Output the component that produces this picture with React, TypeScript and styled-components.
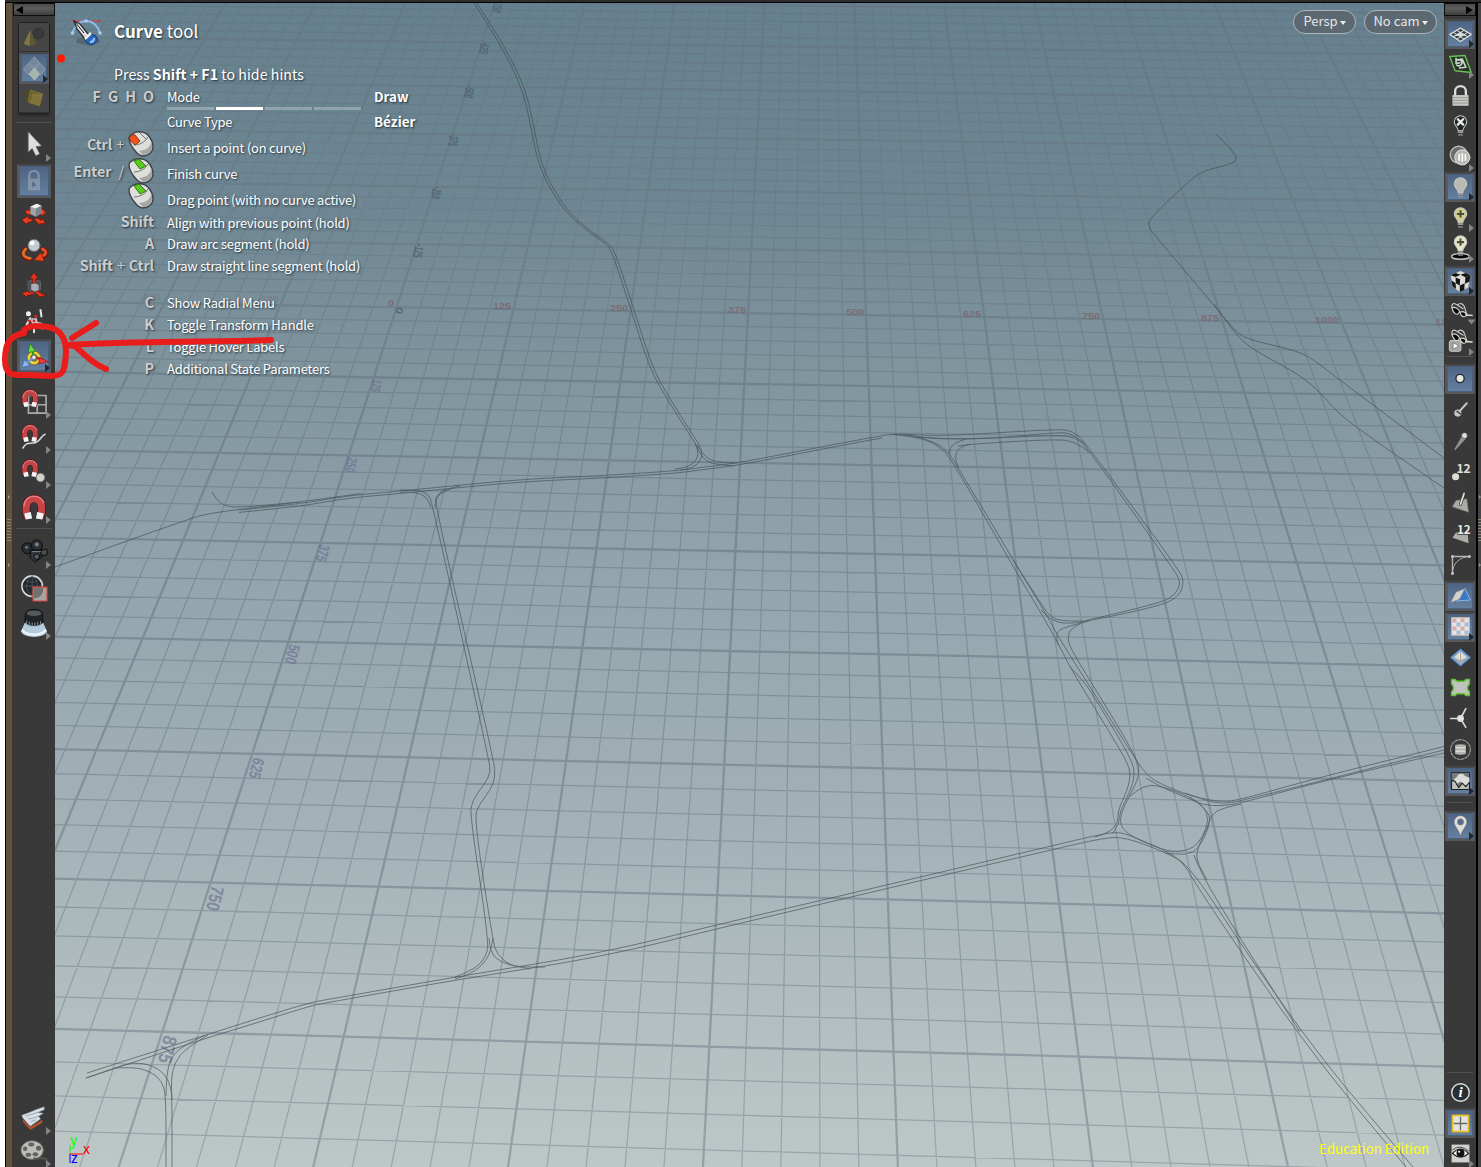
import React from "react";
import styled, { createGlobalStyle, css } from "styled-components";

const Global = createGlobalStyle`
  * { box-sizing: border-box; }
  html, body { margin: 0; padding: 0; background: #fff; }
  body { font-family: "Noto Sans CJK SC", "Noto Sans", sans-serif; overflow: hidden; }
`;

const Window = styled.div`
  position: relative;
  display: flex;
  flex-direction: column;
  width: 1481px;
  height: 1167px;
  padding-left: 5px;
  overflow: hidden;
`;
const TopEdge = styled.div`
  height: 3px;
  flex: none;
  background: #2c2e2e;
  border-bottom: 1px solid #000;
`;
const Body = styled.div`
  display: flex;
  flex: 1;
  min-height: 0;
`;
const Splitter = styled.div<{ $right?: boolean }>`
  width: ${(p) => (p.$right ? 5 : 8)}px;
  flex: none;
  display: flex;
  flex-direction: column;
  align-items: center;
  padding-top: 492px;
  gap: 20px;
  background: ${(p) => (p.$right ? "#454545" : "#5e543f")};
  border-left: ${(p) => (p.$right ? 2 : 1)}px solid #000;
  border-right: ${(p) => (p.$right ? "none" : "1px solid #3f392c")};
`;
const Notch = styled.i`
  width: 0;
  height: 0;
  border: 2px solid transparent;
  border-left-color: #a09a8c;
  margin-left: 2px;
`;
const Grip = styled.i`
  width: 4px;
  height: 24px;
  background: repeating-linear-gradient(#8d8675 0 1px, transparent 1px 3px);
`;
const Toolbar = styled.div<{ $w: number }>`
  width: ${(p) => p.$w}px;
  flex: none;
  display: flex;
  flex-direction: column;
  align-items: center;
  background: #393939;
`;
const ToolbarHead = styled.div<{ $right?: boolean }>`
  align-self: stretch;
  height: 13px;
  flex: none;
  display: flex;
  align-items: center;
  justify-content: ${(p) => (p.$right ? "flex-end" : "flex-start")};
  padding: 0 2px;
  background: linear-gradient(#4a4a4a, #5c5c5c 40%, #3e3e3e);
  border: 1px solid #0c0c0c;
  &::before {
    content: "";
    border: 4px solid transparent;
    border-${(p) => (p.$right ? "left" : "right")}: 7px solid #000;
    border-${(p) => (p.$right ? "right" : "left")}: 0;
  }
`;
const Slot = styled.div<{ $h: number }>`
  height: ${(p) => p.$h}px;
  align-self: stretch;
  flex: none;
  display: flex;
  align-items: center;
  justify-content: center;
`;
const lit = css`
  background: linear-gradient(#4d6384, #66809f);
  border: 2px solid #56585b;
  border-top-color: #474747;
  box-shadow: inset 0 0 0 1px #48617f;
`;
const Tool = styled.div<{ $active?: boolean; $size: number }>`
  position: relative;
  display: flex;
  align-items: center;
  justify-content: center;
  width: ${(p) => p.$size}px;
  height: ${(p) => p.$size}px;
  ${(p) => p.$active && lit}
`;
const Flyout = styled.i<{ $dark?: boolean; $down?: boolean; $size: number }>`
  position: absolute;
  right: ${(p) => (p.$dark ? -1 : p.$size > 30 ? 0 : 1)}px;
  bottom: ${(p) => (p.$dark ? -1 : 0)}px;
  border: 4px solid transparent;
  border-left: 5px solid ${(p) => (p.$dark ? "#23262b" : "#858585")};
  border-right: 0;
  ${(p) => p.$down && css`transform: rotate(90deg);`}
`;
const Divider = styled.div<{ $before: number; $after: number }>`
  align-self: stretch;
  flex: none;
  height: 1px;
  margin: ${(p) => p.$before}px 3px ${(p) => p.$after}px;
  background: #525252;
`;
const Gap = styled.div<{ $h?: number }>`
  ${(p) => (p.$h ? css`height: ${p.$h}px; flex: none;` : css`flex: 1;`)}
`;
const ModeGroup = styled.div`
  margin-top: 6px;
  width: 32px;
  height: 92px;
  flex: none;
  display: flex;
  flex-direction: column;
  border: 1px solid #202020;
  border-radius: 3px;
  box-shadow: 0 2px 2px #2a2a2a;
  background: #4a4a4a;
`;
const ModeCell = styled.div<{ $active?: boolean }>`
  position: relative;
  flex: 1;
  display: flex;
  align-items: center;
  justify-content: center;
  background: #454545;
  border-bottom: 1px solid #333;
  ${(p) => p.$active && lit}
`;
const Viewport = styled.div`
  position: relative;
  flex: 1;
  min-width: 0;
  overflow: hidden;
  display: flex;
  flex-direction: column;
  background: linear-gradient(#65808e 0%, #6f8794 18%, #82969f 33%, #93a5ad 50%, #a0afb5 67%, #afbbbe 83%, #bdc7c7 100%);
`;
const Scene = styled.svg`
  position: absolute;
  inset: 0;
`;
const Overlay = styled.svg`
  position: absolute;
  left: 0;
  top: 0;
  pointer-events: none;
`;
const Hud = styled.div`
  position: relative;
  flex: 1;
  display: flex;
  justify-content: space-between;
  padding: 7px 7px 0 15px;
  color: #fff;
  text-shadow: 1px 1px 2px rgba(20, 35, 45, 0.85);
`;
const HudLeft = styled.div`
  width: 400px;
`;
const Title = styled.div`
  display: flex;
  align-items: center;
  gap: 9px;
  height: 43px;
  font-size: 17px;
  line-height: 24px;
  white-space: pre;
  span { margin-top: -2px; }
`;
const HideHint = styled.div`
  margin-left: 44px;
  height: 41px;
  padding-top: 11px;
  line-height: 20px;
  font-size: 14.25px;
  white-space: pre;
`;
const HintRow = styled.div<{ $h: number }>`
  display: grid;
  grid-template-columns: 84px 13px 207px 1fr;
  align-items: center;
  height: ${(p) => p.$h}px;
  font-size: 13px;
  line-height: 18px;
  margin-top: -8px;
  margin-bottom: 8px;
  white-space: pre;
`;
const Keys = styled.div<{ $spaced?: boolean; $mouse?: boolean }>`
  display: flex;
  justify-content: flex-end;
  align-items: center;
  gap: 4px;
  color: #cccdce;
  font-size: 14.300px;
  font-weight: 700;
  letter-spacing: -0.1px;
  word-spacing: ${(p) => (p.$spaced ? 4 : 0)}px;
  margin-top: ${(p) => (p.$mouse ? -7 : -3)}px;
  i { font-style: normal; font-weight: 400; }
`;
const Desc = styled.div`
  grid-column: 3;
  letter-spacing: -0.230px;
`;
const Value = styled.div`
  font-weight: 700;
  font-size: 13.400px;
  margin-top: -3px;
`;
const ModeBar = styled.div`
  display: flex;
  gap: 2px;
  height: 3px;
  margin: -9px 0 8px 97px;
  width: 194px;
`;
const ModeStep = styled.i<{ $on?: boolean }>`
  flex: 1;
  background: ${(p) => (p.$on ? "#fff" : "rgba(185,198,205,.5)")};
`;
const Cameras = styled.div`
  display: flex;
  gap: 8px;
  height: 24px;
`;
const Pill = styled.div<{ $w: number }>`
  width: ${(p) => p.$w}px;
  height: 24px;
  display: flex;
  align-items: center;
  justify-content: center;
  gap: 2px;
  border: 1.500px solid #aeb5b9;
  border-radius: 12px;
  background: rgba(90, 98, 104, 0.75);
  color: #e4e6e7;
  font-size: 13px;
  line-height: 20px;
  padding-bottom: 3px;
  text-shadow: none;
  &::after {
    content: "";
    margin-top: 5px;
    border: 3px solid transparent;
    border-top: 4px solid #eee;
    border-bottom: 0;
  }
`;
const Foot = styled.div`
  position: relative;
  display: flex;
  align-items: flex-end;
  justify-content: space-between;
  padding: 0 15px 0 11px;
`;
const Edition = styled.div`
  color: #ffff14;
  font-size: 13.250px;
  line-height: 18px;
  padding-bottom: 9px;
`;

/* Ground plane: one unit is one major square, five cells to a side. */
const project = (u: number, v: number): [number, number] => {
  const w = 1 - 0.0017 * u - 0.0511 * v;
  return [
    (115.9 * u - 41.75 * v + 396.5) / w - 55,
    (1.41 * u + 50.77 * v + 307.3) / w - 3,
  ];
};
const segment = (a: [number, number], b: [number, number]) =>
  `M${a[0].toFixed(1)} ${a[1].toFixed(1)}L${b[0].toFixed(1)} ${b[1].toFixed(1)}`;

function gridPath(major: boolean) {
  let d = "";
  for (let i = -40; i <= 75; i++) {
    if ((i % 5 === 0) !== major) continue;
    d += segment(project(i / 5, -9), project(i / 5, 9.5));
    if (i <= 47) d += segment(project(-9, i / 5), project(16, i / 5));
  }
  return d;
}

type Pt = [number, number];
const smooth = (pts: Pt[]) => {
  let d = `M${pts[0][0]} ${pts[0][1]}`;
  for (let i = 1; i < pts.length - 1; i++) {
    const [x, y] = pts[i];
    const [nx, ny] = pts[i + 1];
    d += `Q${x} ${y} ${(x + nx) / 2} ${(y + ny) / 2}`;
  }
  const l = pts[pts.length - 1];
  return d + `L${l[0]} ${l[1]}`;
};
const shift = (pts: Pt[], dx: number, dy: number): Pt[] => pts.map(([x, y]) => [x + dx, y + dy]);

const north: Pt[] = [[474, 3], [490, 28], [506, 55], [519, 82], [526, 103], [532, 133], [538, 163], [549, 187], [564, 210], [583, 228], [605, 243], [611, 250], [619, 273], [632, 313], [648, 363], [660, 388], [695, 443]];
const west: Pt[] = [[239, 510], [300, 504], [337, 497.5], [361, 494.5], [406, 490.5], [471, 484], [528, 479], [606, 475.5], [680, 470.5], [700, 467.5], [738, 463], [818, 447.5], [882, 435.5], [894, 434], [913, 436], [946, 440], [1058, 435], [1075, 437], [1087, 447], [1174, 570], [1181, 582], [1176, 594], [1162, 602.5], [1082, 621.5]];
const south: Pt[] = [[87, 1073], [240, 1024], [310, 1002.5], [325, 1000], [455, 977], [600, 953.5], [720, 924], [908, 880], [1051, 846], [1098, 835], [1118, 831.5], [1131, 836], [1165, 850], [1184, 863], [1195, 883], [1243, 955], [1317, 1060], [1406, 1167]];
const roads: Pt[][] = [
  north,
  shift(north, 3, 0),
  [[695, 443], [699, 452], [696, 461], [688, 467], [675, 469]],
  [[698, 443], [703, 452], [700, 462], [692, 468], [680, 470]],
  [[697, 445], [703, 455], [714, 462], [735, 463]],
  [[695, 443], [701, 457], [712, 464], [735, 466]],
  west,
  shift(west.slice(0, 13), 0, 2.4),
  [[55, 567], [190, 518], [212, 513], [239, 509.5], [300, 502], [361, 493.5]],
  [[212, 492], [217, 501], [226, 506], [239, 507.7], [300, 502]],
  [[400, 490], [418, 490], [428, 494], [432, 502], [489, 760], [490.5, 773], [485, 783], [472, 801], [470, 815], [489, 942], [486, 957], [475, 969], [455, 977]],
  [[460, 486], [445, 489], [437, 495], [434.6, 503], [493.8, 760], [495.4, 777], [491, 789], [479, 805], [474, 818], [493, 942], [497, 954], [509, 965], [530, 969]],
  [[400, 492], [416, 492], [427, 497], [431, 508]],
  [[453, 488], [442, 492], [436, 498], [435, 508]],
  [[489, 938], [490, 952], [500, 962], [518, 967], [545, 967]],
  [[493, 938], [491, 952], [482, 966], [468, 975], [455, 979]],
  [[894, 434], [913, 434.5], [946, 436], [1058, 429], [1073, 431], [1085, 442], [1179, 570], [1184.5, 582], [1179, 596], [1162, 605.5], [1089, 621], [1065, 624], [1051, 620], [1041, 610]],
  [[918, 437], [970, 441], [1058, 432], [1073, 434], [1086, 445]],
  [[958, 446], [970, 444], [1058, 439], [1075, 442], [1089, 452]],
  [[970, 444], [959, 447], [954.5, 457], [958.6, 468]],
  [[966, 439], [952, 443], [949, 454]],
  [[890, 434], [916, 437], [932, 442], [946, 452], [956, 468], [985, 517], [1008, 558], [1041, 613], [1058, 643], [1070, 667], [1094, 707], [1127, 761], [1131, 775], [1127, 791], [1118, 810], [1118, 823], [1110, 832], [1095, 837]],
  [[905, 434], [932, 440], [949, 452], [958, 468], [988, 517], [1013, 560], [1048, 617], [1060, 640], [1094, 693], [1136, 760], [1146, 774], [1158, 783], [1193, 797], [1222, 802], [1241, 799.5], [1317, 778], [1444, 746.5]],
  [[1013, 560], [1045, 610], [1051, 617], [1061, 621], [1082, 621]],
  [[1070, 667], [1084, 681], [1098, 703], [1132, 760], [1135, 775], [1130, 792], [1120, 811], [1119, 824], [1112, 834]],
  [[1089, 621], [1064, 627], [1056, 633], [1058, 645]],
  [[1082, 623], [1071, 628], [1067.5, 637], [1070, 648], [1099, 695], [1137, 758], [1140, 775], [1129, 797], [1121, 813], [1120, 826], [1132, 837], [1163, 850], [1179, 852], [1194, 848], [1203, 836], [1209, 820], [1204, 806], [1188, 796], [1158, 785], [1143, 786], [1129, 797]],
  [[1146, 778], [1158, 786], [1190, 799], [1203, 805], [1222, 806], [1241, 803], [1331, 779], [1444, 753]],
  [[1185, 793], [1204, 800], [1222, 804], [1241, 801], [1444, 750]],
  [[1241, 804], [1222, 808], [1211, 815], [1208, 827], [1198, 846], [1196, 860], [1207, 880]],
  [[1190, 797], [1207, 809], [1211, 822], [1199, 849], [1186, 855], [1165, 853]],
  south,
  [[86, 1078], [200, 1040], [240, 1028], [310, 1006], [325, 1003], [455, 980], [600, 957.5], [720, 928], [923, 880], [1051, 850], [1103, 838], [1125, 837], [1167, 853], [1190, 866], [1250, 958], [1322, 1060], [1413, 1167]],
  [[1194, 855], [1200, 872], [1238, 935], [1300, 1032]],
  [[86, 1078], [115, 1068], [133, 1062], [152, 1065], [165, 1074], [171, 1087], [172, 1100], [172, 1167]],
  [[115, 1068], [133, 1067], [150, 1071], [162, 1081], [166, 1096], [166, 1167]],
  [[205, 1035], [182, 1046], [170, 1059], [166.5, 1077], [166, 1096]],
  [[208, 1035], [186, 1048], [175, 1062], [171, 1078], [172, 1100]],
  [[1216, 134], [1232, 150], [1238, 159], [1230, 164.5], [1202, 171], [1187, 183], [1153, 215], [1147, 225], [1157, 238], [1218, 310], [1237, 333], [1250, 340], [1298, 351], [1314, 360], [1341, 381], [1444, 458]],
  [[1214, 304], [1234, 333], [1253, 350], [1304, 377], [1327, 400], [1345, 420], [1444, 488]],
];

const xLabels: [string, number, number][] = [
  ["-250", 150, 299.5], ["-125", 268, 301.5], ["0", 391, 306], ["125", 502, 308.5], ["250", 619, 311], ["375", 737, 313],
  ["500", 855, 315], ["625", 972, 317], ["750", 1091, 319], ["875", 1210, 321], ["1000", 1327, 323], ["1125", 1447, 325],
];
const zLabels: [string, number, number, number][] = [
  ["-750", 497, 6, 13], ["-625", 484, 47, 14], ["-500", 469, 91, 14], ["-375", 453, 139, 14], ["-250", 436, 192, 14], ["-125", 418, 250, 15],
  ["0", 400, 310, 7], ["125", 376, 385, 13], ["250", 350.5, 464, 15], ["375", 322, 552, 17], ["500", 291, 653, 20],
  ["625", 255, 767, 21], ["750", 213, 897, 25], ["875", 165, 1048, 28],
];

function GroundPlane() {
  return (
    <Scene width="1389" height="1164" viewBox="0 0 1389 1164">
      <defs>
        <linearGradient id="line" gradientUnits="userSpaceOnUse" x1="0" y1="0" x2="0" y2="1164">
          <stop offset="0" stopColor="#647885" />
          <stop offset=".35" stopColor="#71848e" />
          <stop offset=".7" stopColor="#83929b" />
          <stop offset="1" stopColor="#95a1a8" />
        </linearGradient>
      </defs>
      <path d={gridPath(false)} stroke="url(#line)" strokeWidth="1.25" opacity=".9" fill="none" />
      <path d={gridPath(true)} stroke="url(#line)" strokeWidth="2.300" fill="none" />
      <g fontFamily="Liberation Sans, sans-serif" fontWeight="700" textAnchor="middle">
        {xLabels.map(([t, x, y]) => (
          <text key={t} transform={`translate(${x - 55} ${y - 3}) scale(1.200 1)`} fontSize="9" fill="#7d5a62" opacity={t[0] === "-" ? 0.3 : 0.65}>{t}</text>
        ))}
        {zLabels.map(([t, x, y, len]) => (
          <text key={t} transform={`translate(${x - 59} ${y - 3}) rotate(${y < 400 ? 102 : 104}) scale(${len / (t.length * 9)} ${(y < 320 ? 0.4 : 0.45) + len / 36})`} fontSize="16" fill={y < 320 ? "#4c5d6d" : "#666a8c"} opacity={y < 320 ? 0.75 : 0.6}>{t}</text>
        ))}
      </g>
      <g transform="translate(-55 -3)" fill="none" stroke="#424c50" strokeWidth=".85" opacity=".75">
        {roads.map((r, i) => <path key={i} d={smooth(r)} />)}
      </g>
    </Scene>
  );
}

const Art = ({ s = 28, children }: { s?: number; children: React.ReactNode }) => (
  <svg width={s} height={s} viewBox="0 0 28 28" fill="none" overflow="visible" strokeLinecap="round" strokeLinejoin="round">{children}</svg>
);

const Arrows = () => (
  <g fill="#e8401f" stroke="#7a120a" strokeWidth=".8">
    <path d="M4 10l5-2 1 2 3 0v3l-5 1z" /><path d="M24 8l3 4-5 3-1-2-3 0v-4z" />
    <path d="M1 19l7-4 0 3 4 0v3l-5 1-1 2z" /><path d="M26 23l-9 1 1-2-4-3 3-2 5 3 1-2z" />
  </g>
);
const Cube = ({ x = 0, y = 0 }) => (
  <g transform={`translate(${x} ${y})`}>
    <path d="M10 5l7-3 5 2v8l-6 4-6-3z" fill="#9ba3a9" /><path d="M10 5l7-3 5 2-6 3z" fill="#eef2f4" /><path d="M16 7l6-3v8l-6 4z" fill="#7b848b" />
  </g>
);
const Magnet = ({ k = 1 }) => (
  <g transform={`scale(${k})`}>
    <path d="M7.500 25C4 18 4.500 5 14 5s9.500 13 6.500 20" stroke="#4e1316" strokeWidth="9" strokeLinecap="butt" />
    <path d="M7.500 25C4 18 4.500 5 14 5s9.500 13 6.500 20" stroke="#c54547" strokeWidth="7.500" strokeLinecap="butt" />
    <path d="M3 13C4 6 8 2.500 14 2.500s9 3 10.500 7" stroke="#ea8182" strokeWidth="1.500" />
    <path d="M3.500 21l7-1.500 1.500 7-7 1zM24.500 21l-7-1.500-1.500 7 7 1z" fill="#f3f3f3" />
  </g>
);
const Bulb = ({ fill, y = 0 }: { fill: string; y?: number }) => (
  <g transform={`translate(0 ${y})`}>
    <path d="M14 3a7 7 0 0 0-7 7c0 4 4 5 4.500 10h5C17 15 21 14 21 10a7 7 0 0 0-7-7z" fill={fill} stroke="#c9c9c5" strokeWidth="1.200" />
    <path d="M11.500 21.500h5M12 24.500h4" stroke="#999" strokeWidth="1.600" />
  </g>
);
const Glasses = ({ y = 0 }) => (
  <g transform={`translate(0 ${y})`}>
    <path d="M5 10C3 5 6 3 9 5l8 5M11 6c2-3 5-2 7 1l3 9" stroke="#c9c9c5" strokeWidth="1.300" />
    <path d="M4.500 9c3-1.500 7 .5 8.500 4-1 3-3 4-5 2.500C6 14 5 12 4.500 9z" fill="#080808" stroke="#d6d6d2" strokeWidth="1.300" />
    <path d="M13.500 14c3-1.500 6 0 7.500 3-2 3-6 3-7.500-3z" fill="#080808" stroke="#d6d6d2" strokeWidth="1.300" />
    <path d="M20 17l7 .5" stroke="#e5e5e2" strokeWidth="1.600" />
  </g>
);

const icons: Record<string, React.ReactNode> = {
  objects: <g><circle cx="19" cy="9" r="6.500" fill="#3a3a3a" stroke="#2c2c2c" /><path d="M9 5l7 16c-2 4-13 4-15 0z" fill="#5f5836" /><path d="M9 5L1 21c1 2 4 3 7 3z" fill="#7f7549" /></g>,
  points: <g stroke="#9aa6b2" fill="#75879c" strokeWidth="1"><path d="M14 0l6 7-6 7-6-7z" /><path d="M7 8l6 7-6 7-6-7zM21 8l6 7-6 7-6-7z" /><path d="M14 14l6 7-6 7-6-7z" fill="#a6b5ac" stroke="#bcc8b6" /></g>,
  prims: <g><path d="M2 5l9-1-2 15-7-2z" fill="#4f4929" /><path d="M10 4l15 5-4 15-14-5z" fill="#6b6230" stroke="#877b3c" /><path d="M12 8l13 1-4 15-12-3z" fill="#80743a" /></g>,
  select: <path d="M8 0l14 15-6 .5 4 8-4 2-4-8-4 4z" fill="#dedede" stroke="#777" strokeWidth=".6" />,
  lock: <g opacity=".7"><path d="M9 12V8a5 5 0 0 1 10 0v4" stroke="#94a2b2" strokeWidth="2.500" /><path d="M7.500 11.500h13V24h-13z" fill="#94a2b2" /><path d="M12 14l5 5-3 .3-2 2z" fill="#4f6a8c" /></g>,
  move: <g><Arrows /><Cube /></g>,
  rotate: <g><path d="M5 13c-6 5-3 10 5 11M23 13c7 3 5 8-3 9" stroke="#75160a" strokeWidth="4.500" /><path d="M5 13c-5 5-2 9 5 10" stroke="#d9702c" strokeWidth="3" /><path d="M23 13c6 3 4 7-3 8" stroke="#e3502a" strokeWidth="3" /><path d="M25 26l-11-1 7-8z" fill="#e8421c" stroke="#75160a" strokeWidth=".6" /><circle cx="14" cy="9" r="6.500" fill="#c3cbd3" stroke="#626c75" /><circle cx="12" cy="6.500" r="2.500" fill="#fff" /></g>,
  scale: <g><path d="M8 9l6-2 7 2v9l-7 4-6-3z" fill="#4b5257" stroke="#70787c" strokeWidth=".6" /><path d="M14 0l4.500 6h-3v5h-3V6h-3zM1 22l7-3v2l5-1v3l-6 1v2zM27 24l-9 2 1-2-4-3 2-2 5 3z" fill="#e8341f" stroke="#7a120a" strokeWidth=".7" /><path d="M11 12l4-1 4 2v5l-4 2-4-2z" fill="#a9b0b5" /></g>,
  pose: <g stroke="#e4e4e4" strokeWidth="2.200"><path d="M21 1l1 7M10 10l-4 7M12 12l2 8 0 5M17 15l5 1 1 5" /><circle cx="8" cy="5" r="2.700" fill="#eee" stroke="none" /><path d="M11 10l6 0 1 6-5 2z" fill="#ccc" stroke="none" /><g fill="#e02a20" stroke="none"><circle cx="16" cy="8" r="1.600" /><circle cx="9" cy="13" r="1.600" /><circle cx="14" cy="13" r="1.600" /><circle cx="17" cy="18" r="1.600" /></g></g>,
  handles: <g><circle cx="14" cy="16" r="5.500" stroke="#8a7510" strokeWidth="4" /><circle cx="14" cy="16" r="5.500" stroke="#f0d83c" strokeWidth="2.600" /><path d="M14 15L12 7" stroke="#2f9a22" strokeWidth="2.500" /><path d="M10 1l5.500 8-7.500 1z" fill="#64dd3d" stroke="#25801b" strokeWidth=".7" /><path d="M14 15l9 3" stroke="#c32222" strokeWidth="2.500" /><path d="M29 20l-9-4-1 6z" fill="#f13a3c" stroke="#8f1414" strokeWidth=".7" /><path d="M13 16l-6 5" stroke="#6d9cd8" strokeWidth="2.500" /><path d="M1 26l3-8 5 6z" fill="#8fbaf0" stroke="#4571a8" strokeWidth=".7" /><circle cx="14" cy="15.500" r="2.300" fill="#fff" stroke="#777" /></g>,
  snapGrid: <g><path d="M8 7h19v19H8zM17.500 7v19M8 17h19" stroke="#a9adaa" strokeWidth="1.800" /><Magnet k={0.7} /></g>,
  snapCurve: <g><Magnet k={0.7} /><path d="M2 26c4-8 8-4 14-6 6-3 6-8 10-9" stroke="#d8dcdc" strokeWidth="1.600" /></g>,
  snapPoint: <g><Magnet k={0.7} /><circle cx="21" cy="20" r="4.600" fill="#d2d2c9" stroke="#777" /></g>,
  snapAll: <Magnet />,
  camera: <g stroke="#060606"><circle cx="7" cy="10" r="6" fill="#282c31" /><circle cx="17" cy="7" r="6" fill="#2b3036" /><path d="M11 12l12 0v7l-8 6-5-5z" fill="#353a40" /><circle cx="17" cy="6" r="2.200" fill="#78818b" stroke="none" /><circle cx="6" cy="9" r="1.800" fill="#68717b" stroke="none" /><path d="M22 12l6-1v6l-6 1z" fill="#484e54" /><circle cx="17" cy="19" r="3" fill="#545d67" /><path d="M12 13.500h9" stroke="#7b848c" /></g>,
  render: <g><circle cx="12" cy="12" r="11" stroke="#d9d9d9" strokeWidth="1.800" fill="#20262a" /><path d="M1 12h22M12 1v22M5 5c4 4 10 4 14 0M12 1c-8 6-8 16 0 22M12 1c7 6 7 12 3 18" stroke="#596368" strokeWidth=".8" /><path d="M13 13h15v15H13z" fill="#a5a5a2" stroke="#da4545" strokeWidth="1.300" /><path d="M14 25c7 0 10-5 10-11H14z" fill="#72706d" /></g>,
  brush: <g><path d="M4 14L0 23c2 8 26 8 28 0l-4-9z" fill="#b4cddc" /><path d="M2 22c5 6 19 6 24 0" stroke="#ecf6fc" strokeWidth="2.500" /><path d="M5 3c2-5 16-5 18 0l1 10c-3 5-17 5-20 0z" fill="#202426" stroke="#0d0d0d" strokeWidth=".7" /><ellipse cx="14" cy="3.500" rx="8" ry="3" fill="#545a5d" /><path d="M6 12v3M9 13v4M12 14v4M15 14v4M18 13.500v4M21 12.500v3" stroke="#8d979b" /></g>,
  hands: <g><path d="M2 15l8 9 13-8v3L10 27 2 18z" fill="#b84e2c" /><path d="M1 11l8-3 7-3 9-3 0 3-7 3 6 1-5 3 2 3-11 8-8-9z" fill="#d7e1e7" stroke="#8c99a2" strokeWidth=".6" /><path d="M5 12l7-2 6-2M8 15l6-1 5-2M11 18l5-2" stroke="#87939b" strokeWidth=".8" /></g>,
  reel: <g><ellipse cx="12" cy="13" rx="12" ry="10" fill="#bdbdb9" stroke="#77776f" /><g fill="#62635e"><ellipse cx="11" cy="7" rx="3.200" ry="2.200" /><ellipse cx="4.500" cy="11.500" rx="2.400" ry="2.400" /><ellipse cx="19" cy="11" rx="2.800" ry="2.600" /><ellipse cx="8" cy="18" rx="3" ry="2.200" /><ellipse cx="15.500" cy="17.500" rx="3" ry="2.200" /></g><path d="M14 22c6 1 9-2 13 1l1 4" stroke="#555" strokeWidth="2" /></g>,

  plane: <g transform="translate(0 3)" stroke="#d8dad6" strokeWidth="1.400"><path d="M14 5l12 7-12 8L2 12z" fill="#33404d" /><path d="M10 7.500l12 7M6 9.700l12 7.600M18 7.500L6 14.700M22 9.700l-12 7.600" strokeWidth="1.200" /><path d="M14 9l4.500 3-4.500 3-4.500-3z" fill="#d8dad6" stroke="none" /></g>,
  orient: <g><path d="M2 5l17-1 7 19-18-2z" stroke="#6bbd55" strokeWidth="1.600" fill="#263126" /><path d="M9 9l7-1 4 9-7 1M10 15c4 2 8-3 4-6M9 7v6l4-1" stroke="#c9d9c9" strokeWidth="1.800" /></g>,
  padlock: <g><path d="M8 14V9a6 5.500 0 0 1 12 0v5" stroke="#dededb" strokeWidth="2.600" /><path d="M5 13.500h18v12H5z" fill="#c9c9c4" /><path d="M5 16.500h18M5 19.500h18M5 22.500h18" stroke="#92928d" /></g>,
  noLight: <g><Bulb fill="#20272a" /><path d="M11 7l6 6M17 7l-6 6" stroke="#eee" strokeWidth="2.500" /></g>,
  headlight: <g><circle cx="12" cy="12" r="9.500" fill="#6a6d69" stroke="#b9bab6" strokeWidth="1.600" /><circle cx="16" cy="15" r="8.500" fill="#b7b9b5" stroke="#e8e8e5" /><path d="M12.500 12v6M16 11v8M19.500 12v6" stroke="#f7f7f5" strokeWidth="2" /></g>,
  light: <Bulb fill="#b9b9b3" />,
  lightPlus: <g><Bulb fill="#d1cd91" /><path d="M14 6v8M10 10h8" stroke="#4a4e3b" strokeWidth="2.300" strokeLinecap="butt" /></g>,
  shadow: <g><ellipse cx="14" cy="24" rx="10" ry="3.200" fill="#060606" stroke="#cacac4" strokeWidth="1.500" /><Bulb fill="#e6e5c8" y={-2} /><path d="M14 4v8M10 8h8" stroke="#4a4e3b" strokeWidth="2.300" strokeLinecap="butt" /></g>,
  checker: <g><path d="M3 8l11-5 11 5-2 14-10 5-8-6z" fill="#dcdcd6" stroke="#777" strokeWidth=".6" /><g fill="#151515"><path d="M8.500 5.500l5.500 2-5.500 2.500L3 8zM19.500 5.500L25 8l-5.500 2.300L14 7.500z" /><path d="M8.500 10.500l5 2-.3 7-4.500-2.500zM4 14l4.500 3 .5 6.500L5 20.500zM19.500 10.300L25 8l-1 7-5 2.500zM13.200 19.500l5.500-2.500-.5 7.500-5 2.500z" /></g></g>,
  glasses: <Glasses y={2} />,
  glassesPlay: <g><Glasses y={-3} /><rect x="1.500" y="13" width="13" height="12" rx="2" fill="#a5a7a3" stroke="#d2d2cf" /><path d="M6 15.500l6 3.500-6 3.500z" fill="#fff" stroke="#666" strokeWidth=".7" /></g>,
  point: <circle cx="13.500" cy="14" r="4.600" fill="#e8e8e0" stroke="#252b32" strokeWidth="1.500" />,
  normal: <g><path d="M12 17L21 7" stroke="#c7c7c1" strokeWidth="2.200" /><circle cx="11" cy="18" r="4" fill="#c7c7c1" /><path d="M10 16l4 3" stroke="#333" strokeWidth="1.500" /></g>,
  trail: <g><path d="M7 24L16 8l4 4L8 25z" fill="#92928d" /><circle cx="18.500" cy="8.500" r="3.300" fill="#dfdfda" stroke="#444" strokeWidth=".7" /></g>,
  number: <g><circle cx="8.500" cy="21" r="4" fill="#ddddd5" /><text x="9.500" y="16.500" fontSize="13.500" fontWeight="700" fontFamily="Noto Sans CJK SC, sans-serif" fill="#e0e0db">12</text></g>,
  primNormal: <g><path d="M9 13l12-2 2 15-18-6z" fill="#a9aba5" stroke="#777" strokeWidth=".6" /><path d="M14 17l4-12" stroke="#333" strokeWidth="3.500" /><path d="M14 17l4-12" stroke="#dcdcd7" strokeWidth="2" /></g>,
  primNumber: <g><path d="M9 14l13-1 1 13-18-6z" fill="#acaea8" /><text x="10" y="15.500" fontSize="13" fontWeight="700" fontFamily="Noto Sans CJK SC, sans-serif" fill="#eeeeea" stroke="#333" strokeWidth="1.500" paintOrder="stroke">12</text></g>,
  hull: <g stroke="#b7b9b4" strokeWidth="1.500"><path d="M5 24V5h19" /><path d="M5 24C5 13 12 6 24 5" strokeWidth="1" /><g fill="#eee"><circle cx="5" cy="5" r="1" /><circle cx="5" cy="24" r="1" /><circle cx="24" cy="5" r="1" /></g></g>,
  shaded: <g><path d="M19 5l6 13-15 1z" fill="#3978c4" stroke="#8cc0f0" /><path d="M9 9l10-4-6 12-10 4z" fill="#d2d3cc" stroke="#777" strokeWidth=".6" /></g>,
  uv: <g><path d="M4 4h20v20H4z" fill="#e3e5e6" stroke="#b8b6ac" strokeWidth="1.300" />{[0, 1, 2, 3].map((r) => [0, 1].map((c) => <rect key={`${r}${c}`} x={5 + c * 9 + (r % 2) * 4.5} y={5 + r * 4.5} width="4.500" height="4.500" fill={r % 2 ? "#a6bbd8" : "#dfa9a7"} />))}</g>,
  wireDiamond: <g><path d="M14 5l10.500 9L14 23 3.500 14z" fill="#aaaba5" stroke="#559ae8" strokeWidth="1.700" /><path d="M14 7l7 7-7 3-7-3z" fill="#deded9" /><path d="M14 7v10" stroke="#999" strokeWidth=".8" /></g>,
  ghost: <path d="M4 5l4 0 2 2h8l2-2 4 0v5l-2 3v3l2 3v4h-4l-2-2h-8l-2 2H4v-4l2-3v-3L4 10z" fill="#c0c3bd" stroke="#5cc631" strokeWidth="1.600" />,
  axes: <g stroke="#ddddd8" strokeWidth="1.800"><path d="M14 14L3 14M14 14l6-11M14 14l6 10" /><circle cx="14" cy="14" r="3" fill="#e8e8e3" /></g>,
  cylinder: <g><circle cx="14" cy="14" r="11" stroke="#969994" strokeWidth="1.300" strokeDasharray="3 1.500" /><path d="M8 9q6-1.500 12 0v10q-6 1.500-12 0z" fill="#b2b4ae" /><path d="M9 12h10M9 16h10" stroke="#d7d8d3" strokeWidth="1.500" /></g>,
  image: <g><path d="M4 5h20v19H4z" fill="#737a7d" stroke="#252525" /><path d="M10 10c1-4 7-5 9-1l5 2v5l-5 4-5-5-6 4c-3-4-1-8 2-9z" fill="#dcddd8" /><path d="M4 14l4 1 4 7 4-5 4 4 4-5v8H4z" fill="#bfc0bb" stroke="#1e2020" strokeWidth="1.200" /></g>,
  pin: <path fillRule="evenodd" d="M14 25.500C12 18 7 15 7 10a7 7 0 0 1 14 0c0 5-5 8-7 15.500zM14 6.500a3.500 3.500 0 1 0 0 7 3.500 3.500 0 0 0 0-7z" fill="#deded9" stroke="#777" strokeWidth=".5" />,
  info: <g><circle cx="14" cy="14" r="9.800" fill="#283036" stroke="#e1e1df" strokeWidth="1.600" /><text x="14" y="19.500" textAnchor="middle" fontSize="17" fontWeight="700" fontStyle="italic" fontFamily="Liberation Serif, serif" fill="#fff">i</text></g>,
  layout: <g><path d="M5 5h18v18H5z" fill="#e3e4df" stroke="#e4bd24" strokeWidth="2" /><path d="M14 7v14M7 14h14" stroke="#6c6b62" strokeWidth="1.500" /></g>,
  eye: <g><path d="M4 4h20v20H4z" fill="#d0d1ce" /><path d="M5 14q9-10 18 0-9 8-18 0z" fill="#fff" stroke="#222" strokeWidth="1.300" /><circle cx="14" cy="13.500" r="4.500" fill="#111" /><circle cx="12.500" cy="12" r="1.200" fill="#fff" /><path d="M5 10q8-7 18 1" stroke="#444" /></g>,
};

type Item = { icon?: string; h?: number; on?: boolean; fly?: boolean; down?: boolean; rule?: [number, number]; gap?: number };
const leftItems: Item[] = [
  { rule: [8, 4] },
  { icon: "select", h: 36, fly: true }, { icon: "lock", h: 35, on: true }, { icon: "move", h: 34 }, { icon: "rotate", h: 36 },
  { icon: "scale", h: 36 }, { icon: "pose", h: 35 }, { icon: "handles", h: 34, on: true, fly: true }, { gap: 12 },
  { icon: "snapGrid", h: 34, fly: true }, { icon: "snapCurve", h: 35, fly: true }, { icon: "snapPoint", h: 35, fly: true }, { icon: "snapAll", h: 35, fly: true },
  { rule: [4, 5] },
  { icon: "camera", h: 36, fly: true }, { icon: "render", h: 35 }, { icon: "brush", h: 35, fly: true },
  {}, { icon: "hands", h: 34, fly: true }, { icon: "reel", h: 32, fly: true },
];
const rightItems: Item[] = [
  { gap: 3 },
  { icon: "plane", h: 29, on: true, fly: true }, { icon: "orient", h: 32, fly: true }, { icon: "padlock", h: 30 }, { icon: "noLight", h: 31 },
  { icon: "headlight", h: 31, fly: true }, { icon: "light", h: 30, on: true, fly: true }, { icon: "lightPlus", h: 30, fly: true }, { icon: "shadow", h: 31, fly: true },
  { gap: 3 }, { icon: "checker", h: 29, on: true, fly: true }, { icon: "glasses", h: 31, fly: true, down: true }, { icon: "glassesPlay", h: 30, fly: true },
  { rule: [0, 7] },
  { icon: "point", h: 29, on: true }, { icon: "normal", h: 32 }, { icon: "trail", h: 30 }, { icon: "number", h: 31 }, { icon: "primNormal", h: 31 },
  { icon: "primNumber", h: 31 }, { icon: "hull", h: 33 }, { icon: "shaded", h: 30, on: true }, { icon: "uv", h: 31, on: true, fly: true },
  { icon: "wireDiamond", h: 30 }, { icon: "ghost", h: 31 }, { icon: "axes", h: 31 }, { icon: "cylinder", h: 31 }, { icon: "image", h: 31, on: true, fly: true },
  { rule: [6, 8] }, { icon: "pin", h: 29, on: true, fly: true },
  {}, { rule: [0, 4] }, { icon: "info", h: 30 }, { icon: "layout", h: 32, on: true }, { icon: "eye", h: 28, fly: true },
];

function Items({ list, size, art }: { list: Item[]; size: number; art: number }) {
  return (
    <>
      {list.map((it, i) =>
        it.icon ? (
          <Slot key={i} $h={it.h!}>
            <Tool $size={size} $active={it.on}>
              <Art s={art}>{icons[it.icon]}</Art>
              {it.fly && <Flyout $dark={it.on} $down={it.down} $size={size} />}
            </Tool>
          </Slot>
        ) : it.rule ? (
          <Divider key={i} $before={it.rule[0]} $after={it.rule[1]} />
        ) : (
          <Gap key={i} $h={it.gap} />
        ),
      )}
    </>
  );
}

const Mouse = ({ left }: { left?: boolean }) => (
  <svg width="26" height="26" viewBox="0 0 26 26">
    <path d="M1 7C1 3 8 0 14 1c6 1 11 8 11 15 0 5-5 9-10 9C9 25 1 13 1 7z" fill="#dededb" stroke="#3f454a" strokeWidth="1.400" />
    <path d="M15 24c5 0 9-3 9-8 0-2 0-4-1-6 0 5-3 9-12 10z" fill="#a6a7a4" />
    {left
      ? <path d="M1.500 6L6 3l6 7-5 4C3 11 1.500 9 1.500 6z" fill="#f0521c" stroke="#902b0c" />
      : <path d="M6 3l5-2 7 7-6 3z" fill="#55cc1c" stroke="#2d8211" />}
    <path d="M6 14c4 0 11-2 14-8M11 1l7 7" stroke="#555" strokeWidth=".8" fill="none" />
  </svg>
);

const CurveIcon = () => (
  <svg width="35" height="30" viewBox="0 0 35 30" fill="none">
    <ellipse cx="18" cy="24" rx="12" ry="4" fill="#3f5059" opacity=".5" />
    <path d="M3 4h27" stroke="#c4505a" strokeWidth="1.400" />
    <path d="M2 17C5 8 10 4 16 4s12 4 14 13" stroke="#8db9ec" strokeWidth="2" />
    <g fill="#b84450"><circle cx="4" cy="4" r="1.500" /><circle cx="29" cy="4" r="1.500" /></g>
    <g fill="#a8cdf5"><circle cx="2.500" cy="16" r="1.800" /><circle cx="16" cy="4" r="1.800" /><circle cx="30" cy="16" r="1.800" /></g>
    <path d="M4 4l6 3 9 11-4 4L7 12z" fill="#d9dcda" stroke="#2c3032" strokeWidth="1.300" />
    <path d="M5 5l9 11" stroke="#222" />
    <path d="M15 24l6-7 5 2c3 4-1 9-6 9z" fill="#2769bf" stroke="#173d73" />
    <path d="M15 22l6-6" stroke="#eee" strokeWidth="2.500" />
    <path d="M20 25q4 0 4-4" stroke="#9dc5f2" strokeWidth="2" />
  </svg>
);

type Hint = { h: number; keys: React.ReactNode; text: string; value?: string; mouse?: boolean };
const hints: Hint[] = [
  { h: 24, keys: null, text: "Curve Type", value: "Bézier" },
  { h: 27, keys: <>Ctrl<i>+</i><Mouse left /></>, text: "Insert a point (on curve)", mouse: true },
  { h: 26, keys: <>Enter <i>/</i><Mouse /></>, text: "Finish curve", mouse: true },
  { h: 25, keys: <Mouse />, text: "Drag point (with no curve active)", mouse: true },
  { h: 21, keys: "Shift", text: "Align with previous point (hold)" },
  { h: 22, keys: "A", text: "Draw arc segment (hold)" },
  { h: 22, keys: <>Shift<i>+</i>Ctrl</>, text: "Draw straight line segment (hold)" },
  { h: 15, keys: null, text: "" },
  { h: 22, keys: "C", text: "Show Radial Menu" },
  { h: 22, keys: "K", text: "Toggle Transform Handle" },
  { h: 22, keys: "L", text: "Toggle Hover Labels" },
  { h: 22, keys: "P", text: "Additional State Parameters" },
];

const Axis = () => (
  <svg width="26" height="34" viewBox="0 0 26 34" overflow="visible" fontFamily="Noto Sans CJK SC, sans-serif" fontSize="14">
    <path d="M4 12v9" stroke="#0f0" /><path d="M4 21h13" stroke="#f00" /><path d="M4 21v9" stroke="#00f" />
    <text x="4" y="12" fill="#0f0">y</text><text x="17" y="21" fill="#f00">x</text><text x="5" y="30" fill="#00f">z</text>
  </svg>
);

export default function App() {
  return (
    <Window>
      <Global />
      <TopEdge />
      <Body>
        <Splitter><Notch /><Grip /><Notch /></Splitter>
        <Toolbar $w={42}>
          <ToolbarHead />
          <ModeGroup>
            <ModeCell><Art s={23}>{icons.objects}</Art></ModeCell>
            <ModeCell $active><Art s={23}>{icons.points}</Art><Flyout $dark $size={30} /></ModeCell>
            <ModeCell><Art s={22}>{icons.prims}</Art></ModeCell>
          </ModeGroup>
          <Items list={leftItems} size={34} art={26} />
        </Toolbar>
        <Viewport>
          <GroundPlane />
          <Hud>
            <HudLeft>
              <Title><CurveIcon /><span><b>Curve</b> tool</span></Title>
              <HideHint>Press <b>Shift + F1</b> to hide hints</HideHint>
              <HintRow $h={22}><Keys $spaced>F G H O</Keys><Desc>Mode</Desc><Value>Draw</Value></HintRow>
              <ModeBar><ModeStep /><ModeStep $on /><ModeStep /><ModeStep /></ModeBar>
              {hints.map((r, i) => (
                <HintRow key={i} $h={r.h}><Keys $mouse={r.mouse}>{r.keys}</Keys><Desc>{r.text}</Desc><Value>{r.value}</Value></HintRow>
              ))}
            </HudLeft>
            <Cameras><Pill $w={63}>Persp</Pill><Pill $w={73}>No cam</Pill></Cameras>
          </Hud>
          <Foot><Axis /><Edition>Education Edition</Edition></Foot>
        </Viewport>
        <Toolbar $w={32}>
          <ToolbarHead $right />
          <Items list={rightItems} size={30} art={25} />
        </Toolbar>
        <Splitter $right><Notch /><Grip /><Notch /></Splitter>
      </Body>
      <Overlay width="1481" height="1167" viewBox="0 0 1481 1167" fill="none" stroke="#e81d1c" strokeWidth="6" strokeLinecap="round" strokeLinejoin="round">
        <path d="M24 333C9 336 5 344 5 360C5 377 14 375 30 375L48 376C64 377 65 371 66 352C66 338 60 329 48 327C37 325 28 326 24 330" />
        <path d="M271 340C220 342 120 341 68 345M96 323L72 338M68 345L75 346C88 358 94 364 106 369" />
        <circle cx="61" cy="58.500" r="4" fill="#ff1a00" stroke="none" />
      </Overlay>
    </Window>
  );
}
